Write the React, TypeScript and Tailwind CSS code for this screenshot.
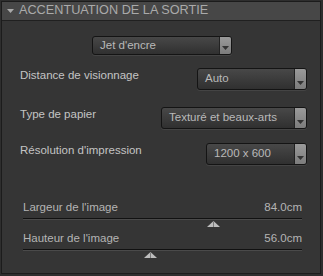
const font = { fontFamily: '"Liberation Sans", Arial, sans-serif' };

function Select({ label, width, height }: { label: string; width: string; height: string }) {
  return (
    <div
      className={`flex ${height} ${width} rounded-[3px] border border-[#141414] bg-gradient-to-b from-[#484848] to-[#303030] shadow-[0_1px_0_#444]`}
    >
      <div className="flex flex-1 items-center truncate pl-[7px] text-[11.5px] text-[#b9b9b9]">{label}</div>
      <div className="flex w-[12px] items-end justify-center rounded-r-[2px] border-l border-[#222] bg-gradient-to-b from-[#9a9a9a] to-[#7c7c7c] pb-[4px]">
        <svg width="7" height="4" viewBox="0 0 7 4">
          <path d="M0 0h7L3.5 4z" fill="#333" />
        </svg>
      </div>
    </div>
  );
}

function Slider({ label, value, pos }: { label: string; value: string; pos: number }) {
  return (
    <div className="flex flex-col">
      <div className="flex justify-between text-[11.5px] leading-[14px] text-[#b4b4b4]">
        <span>{label}</span>
        <span>{value}</span>
      </div>
      <div className="mt-[4px] h-[2px] border-t border-[#111] bg-[#4a4a4a]" />
      <div className="relative h-[11px]">
        <svg
          className="absolute top-[1px]"
          style={{ left: pos }}
          width="13"
          height="6"
          viewBox="0 0 13 6"
        >
          <path d="M6.5 0L13 6H0z" fill="#bdbdbd" />
          <path d="M6.5 0.5v5.5" stroke="#7a7a7a" strokeWidth="1" />
        </svg>
      </div>
    </div>
  );
}

export default function App() {
  return (
    <div className="h-[276px] w-[323px] bg-[#2e2e2e] p-[1px]" style={font}>
      <div className="flex h-[273px] w-[320px] flex-col border border-[#1c1c1c]">
        <div className="flex h-[19px] items-center gap-[5px] border-b border-[#202020] bg-[#474747] pl-[5px]">
          <svg width="7" height="4" viewBox="0 0 7 4">
            <path d="M0 0h7L3.5 4z" fill="#a9a9a9" />
          </svg>
          <span className="text-[12.7px] text-[#aaaaaa]">ACCENTUATION DE LA SORTIE</span>
        </div>
        <div className="flex flex-1 flex-col bg-[#353535]">
          <div className="mt-[15px] flex justify-center pl-[2px]">
            <Select label="Jet d'encre" width="w-[140px]" height="h-[19px]" />
          </div>
          <div className="mt-[13px] flex items-start justify-between pl-[18px] pr-[13px]">
            <span className="text-[11.5px] leading-[14px] text-[#c4c4c4]">Distance de visionnage</span>
            <Select label="Auto" width="w-[110px]" height="h-[22px]" />
          </div>
          <div className="mt-[17px] flex items-start justify-between pl-[18px] pr-[13px]">
            <span className="text-[11.5px] leading-[14px] text-[#c4c4c4]">Type de papier</span>
            <Select label="Texturé et beaux-arts" width="w-[146px]" height="h-[22px]" />
          </div>
          <div className="mt-[14px] flex items-start justify-between pl-[18px] pr-[13px]">
            <span className="text-[11.5px] leading-[14px] text-[#c4c4c4]">Résolution d'impression</span>
            <Select label="1200 x 600" width="w-[101px]" height="h-[22px]" />
          </div>
          <div className="mt-[35px] flex flex-col pl-[21px] pr-[18px]">
            <Slider label="Largeur de l'image" value="84.0cm" pos={184} />
            <Slider label="Hauteur de l'image" value="56.0cm" pos={121} />
          </div>
        </div>
      </div>
    </div>
  );
}
